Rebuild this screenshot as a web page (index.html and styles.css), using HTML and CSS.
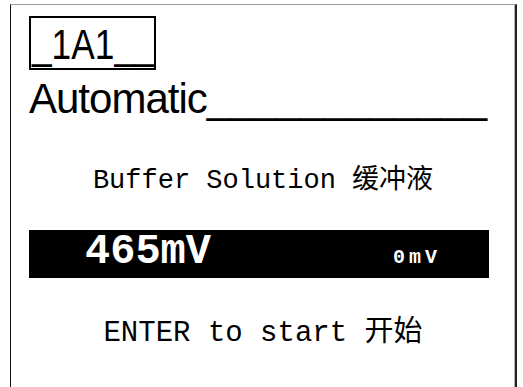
FILE: index.html
```html
<!DOCTYPE html>
<html lang="en">
<head>
    <meta charset="UTF-8">
    <meta name="viewport" content="width=device-width, initial-scale=1.0">
    <title>pH Meter - Calibration</title>
    <link rel="stylesheet" href="styles.css">
</head>
<body>
    <div class="screen">
        <div class="tag-box"><span class="tag-text">_1A1__</span></div>
        <div class="mode">Automatic<span class="fill">____________</span></div>

        <p class="prompt">Buffer Solution 缓冲液</p>

        <div class="reading">
            <span class="reading-value">465mV</span>
            <span class="reading-offset">0mV</span>
        </div>

        <p class="prompt enter">ENTER to start 开始</p>
    </div>
</body>
</html>
```

FILE: styles.css
```css
html, body {
    margin: 0;
    padding: 0;
    background: #fff;
    overflow: hidden;
}
body {
    color: #000;
    font-family: 'Liberation Sans', Arial, sans-serif;
}
.screen {
    width: 504px;
    height: 382px;
    margin: 4px 0 0 10px;
    border-top: 1px solid #9a9a9a;
    border-left: 1px solid #111;
    border-right: 2px solid #222;
    box-shadow: inset -1px 0 0 #b5b5b5;
}
.tag-box {
    box-sizing: border-box;
    width: 127px;
    height: 54px;
    margin: 11px 0 0 18px;
    padding-left: 1px;
    border: 2px solid #000;
    font-size: 42px;
    line-height: 54px;
    white-space: nowrap;
}
.tag-text {
    display: inline-block;
    transform: scaleX(0.84);
    transform-origin: left center;
}
.mode {
    margin: 4px 0 0 18px;
    font-size: 42px;
    line-height: 50px;
    letter-spacing: -1px;
    white-space: nowrap;
}
.mode .fill {
    letter-spacing: 0;
}
.prompt {
    margin: 41px 0 0;
    text-align: center;
    font-family: 'Liberation Mono', 'Courier New', 'Noto Sans CJK SC', monospace;
    font-size: 27px;
    line-height: 32px;
    white-space: nowrap;
}
.prompt.enter {
    margin-top: 39px;
    font-size: 29px;
    line-height: 34px;
}
.reading {
    display: flex;
    align-items: baseline;
    justify-content: space-between;
    width: 460px;
    height: 48px;
    margin: 33px 0 0 18px;
    padding: 0 52px 0 56px;
    box-sizing: border-box;
    background: #000;
    color: #fff;
    font-family: 'Liberation Mono', 'Courier New', monospace;
    font-weight: bold;
}
.reading-value {
    font-size: 42px;
    line-height: 44px;
}
.reading-offset {
    font-size: 20px;
    letter-spacing: 4px;
    margin-right: -4px;
}
```
